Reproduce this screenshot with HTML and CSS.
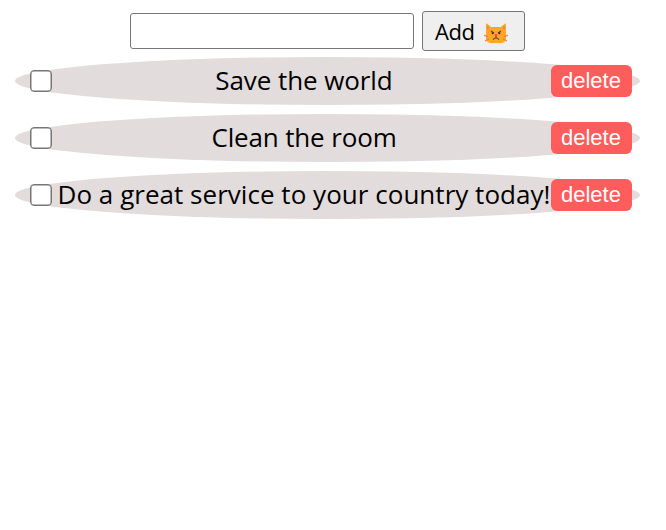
FILE: index.html
```html
<!DOCTYPE html>
<html lang="en">
<head>
<meta charset="utf-8">
<title>Todo list</title>
<link rel="stylesheet" href="styles.css">
</head>
<body>
<form class="add-form">
  <input class="field" type="text" aria-label="New task">
  <button class="add" type="button"><span class="add-label">Add</span>
    <svg class="cat" viewBox="0 0 24 22" aria-hidden="true">
      <path fill="#ffa726" d="M2 1.500Q3 1 7 5H17Q21 1 22 1.500V17Q21 21 17 21H7Q3 21 2 17Z"/>
      <path fill="#ff8052" d="M3 3l2.500 3L3 8zM21 3l-2.500 3L21 8z"/>
      <path d="M0 13l4 2M24 13l-4 2M1 19l4-2M23 19l-4-2" fill="none" stroke="#ff7565" stroke-width="1.200"/>
      <path d="M7 9l3 2M17 9l-3 2M9 17.500q3-3 6 0M12 13v3" fill="none" stroke="#653c24" stroke-width="1.100"/>
      <circle cx="8.700" cy="11.200" r="1.100" fill="#4b3026"/><circle cx="15.300" cy="11.200" r="1.100" fill="#4b3026"/>
      <path fill="#ff3f80" d="M10.300 12h3.400L12 14.500z"/>
    </svg>
  </button>
</form>
<ul class="list">
  <li class="task"><input class="check" type="checkbox"><span class="text">Save the world</span><button class="delete">delete</button></li>
  <li class="task"><input class="check" type="checkbox"><span class="text text-medium">Clean the room</span><button class="delete">delete</button></li>
  <li class="task"><input class="check" type="checkbox"><span class="text text-long">Do a great service to your country today!</span><button class="delete">delete</button></li>
</ul>
</body>
</html>
```

FILE: styles.css
```css
* { box-sizing: border-box; }
body { margin: 0; padding-top: 11px; background: #fff; font-family: "Trebuchet MS", "Open Sans", sans-serif; }
.add-form { display: flex; justify-content: center; align-items: center; gap: 8px; margin: 0 11px 0 0; height: 40px; }
.field { width: 284px; height: 36px; border: 1px solid #767676; border-radius: 3px; }
.add { display: flex; align-items: center; gap: 10px; width: 103px; height: 40px; padding: 0 12px; border: 1px solid #767676; border-radius: 3px; background: #efefef; color: #000; font: 22px "Open Sans", sans-serif; }
.add-label { width: 39px; letter-spacing: -.4px; padding-bottom: 1px; }
.cat { width: 24px; height: 22px; flex: none; margin-top: 4px; }
.list { list-style: none; margin: 6px 26px 0 15px; padding: 0; }
.task { display: flex; align-items: center; height: 48.400px; margin-bottom: 8.600px; padding: 0 8px 0 15px; border-radius: 50%; background: #e2dcdc; }
.check { appearance: none; width: 22px; height: 22px; margin: 0; flex: none; border: 1px solid #767676; border-radius: 4px; background: #fff; box-shadow: inset 0 0 0 .5px #767676; }
.text { flex: 1; margin-left: 5px; padding-bottom: 2px; text-align: center; font-size: 26px; letter-spacing: -.08px; white-space: nowrap; }
.text-medium { letter-spacing: -.15px; }
.text-long { letter-spacing: .03px; }
.delete { width: 81px; height: 32px; padding: 0 1px 0 0; border: 0; border-radius: 6px; background: #ff5c5c; color: #fff; font: 22px "Liberation Sans", Arial, sans-serif; }
```
